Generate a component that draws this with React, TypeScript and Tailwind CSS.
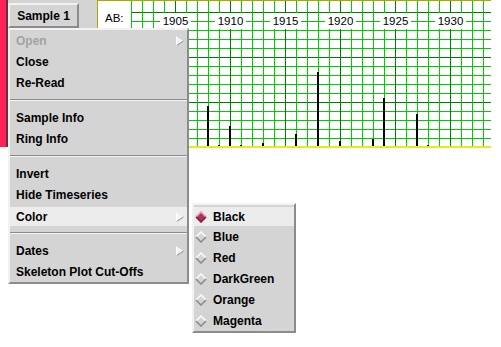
import React from "react";

type Entry = {
  label?: string;
  sep?: boolean;
  disabled?: boolean;
  cascade?: boolean;
  active?: boolean;
};

const mainMenu: Entry[] = [
  { label: "Open", disabled: true, cascade: true },
  { label: "Close" },
  { label: "Re-Read" },
  { sep: true },
  { label: "Sample Info" },
  { label: "Ring Info" },
  { sep: true },
  { label: "Invert" },
  { label: "Hide Timeseries" },
  { label: "Color", cascade: true, active: true },
  { sep: true },
  { label: "Dates", cascade: true },
  { label: "Skeleton Plot Cut-Offs" },
];

const colors = ["Black", "Blue", "Red", "DarkGreen", "Orange", "Magenta"];

// ring widths shown as bars: [year, top y]
const bars: [number, number][] = [
  [1908, 106],
  [1909, 145],
  [1910, 126],
  [1911, 145],
  [1913, 143],
  [1916, 134],
  [1918, 72],
  [1920, 141],
  [1923, 139],
  [1924, 98],
  [1927, 114],
  [1928, 145],
];

const colX = (year: number) => 34 + (year - 1901) * 11;

function Chart() {
  const cols = Array.from({ length: 33 }, (_, k) => k);
  const rows = Array.from({ length: 15 }, (_, j) => j);
  const years = [1905, 1910, 1915, 1920, 1925, 1930];

  return (
    <svg width={394} height={148} className="block shrink-0">
      <rect width={394} height={148} fill="#ffffff" />
      {rows.map((j) => (
        <line
          key={"h" + j}
          x1={34}
          x2={394}
          y1={12 + 9 * j + 0.5}
          y2={12 + 9 * j + 0.5}
          stroke={j % 5 === 0 ? "#008000" : "#00cc00"}
          strokeWidth={1}
        />
      ))}
      {cols.map((k) => (
        <line
          key={"v" + k}
          x1={34 + 11 * k + 0.5}
          x2={34 + 11 * k + 0.5}
          y1={0}
          y2={146}
          stroke={(k - 4) % 5 === 0 ? "#008000" : "#00cc00"}
          strokeWidth={1}
        />
      ))}
      {years.map((y) => (
        <g key={y}>
          <rect x={colX(y) - 15} y={13} width={31} height={16} fill="#ffffff" />
          <text
            x={colX(y) + 0.5}
            y={25}
            textAnchor="middle"
            fontSize={11.5}
            fontWeight={400}
            fontFamily="'Liberation Sans', Arial, sans-serif"
            fill="#000"
          >
            {y}
          </text>
        </g>
      ))}
      <text
        x={8}
        y={22}
        fontSize={11.5}
        fontWeight={400}
        fontFamily="'Liberation Sans', Arial, sans-serif"
        fill="#000"
      >
        AB:
      </text>
      {bars.map(([year, top]) => (
        <rect key={year} x={colX(year) - 1} y={top} width={2} height={146 - top} fill="#000" />
      ))}
      <rect x={0} y={0} width={394} height={1} fill="#a8a800" />
      <rect x={0} y={0} width={1} height={148} fill="#a8a800" />
      <rect x={0} y={146} width={394} height={2} fill="#e8e820" />
    </svg>
  );
}

function CascadeArrow() {
  return (
    <svg width={8} height={10} className="shrink-0">
      <polygon points="0.5,0.5 7.5,5 0.5,9.5" fill="#f4f4f4" />
      <line x1={0.5} y1={9.5} x2={7.5} y2={5} stroke="#8b8b8b" strokeWidth={1} />
      <line x1={0.5} y1={0.5} x2={0.5} y2={9.5} stroke="#ffffff" strokeWidth={1} />
    </svg>
  );
}

function Diamond({ on }: { on: boolean }) {
  return (
    <svg width={12} height={12} className="shrink-0">
      <polygon points="6,1 11,6 6,11 1,6" fill={on ? "#b03060" : "#d4d4d4"} />
      <polyline
        points="1,6 6,1 11,6"
        fill="none"
        stroke={on ? "#e8a0b8" : "#fafafa"}
        strokeWidth={1.6}
      />
      <polyline
        points="1,6 6,11 11,6"
        fill="none"
        stroke={on ? "#802040" : "#8b8b8b"}
        strokeWidth={1.6}
      />
    </svg>
  );
}

function MenuRow({ item }: { item: Entry }) {
  if (item.sep) {
    return (
      <div className="h-[14px] flex flex-col justify-center">
        <div className="h-[2px] border-t border-t-[#8b8b8b] border-b border-b-[#f4f4f4]" />
      </div>
    );
  }
  return (
    <div className={item.active ? "h-[21px] pt-[2px]" : "h-[21px]"}>
      <div
        className={
          "h-full flex items-center justify-between pl-[6px] pr-[3px] " +
          (item.active ? "bg-[#ececec] " : "") +
          (item.disabled ? "text-[#a3a3a3]" : "text-black")
        }
      >
        <span>{item.label}</span>
        {item.cascade && <CascadeArrow />}
      </div>
    </div>
  );
}

export default function App() {
  return (
    <div className="relative w-[501px] h-[347px] bg-white overflow-hidden font-['Liberation_Sans',Arial,sans-serif] text-[12px] font-bold leading-none">
      {/* main window */}
      <div className="flex h-[148px]">
        <div className="w-[6px] h-[147px] bg-[#ff2458]" />
        <div className="w-[2px] h-[147px] bg-[#643040]" />
        <div className="w-[89px] h-[147px] bg-[#d4d4d4] pt-[3px]">
          <div className="w-[71px] h-[25px] border-2 border-t-[#f2f2f2] border-l-[#f2f2f2] border-b-[#8b8b8b] border-r-[#8b8b8b] flex items-center justify-center">
            Sample 1
          </div>
        </div>
        <Chart />
      </div>

      {/* popup menu */}
      <div className="absolute left-[8px] top-[28px] w-[181px] bg-[#d4d4d4] border-2 border-t-[#f2f2f2] border-l-[#f2f2f2] border-b-[#8b8b8b] border-r-[#8b8b8b]">
        {mainMenu.map((item, i) => (
          <MenuRow key={i} item={item} />
        ))}
      </div>

      {/* color cascade */}
      <div className="absolute left-[192px] top-[203px] w-[104px] bg-[#d4d4d4] border-2 border-t-[#f2f2f2] border-l-[#f2f2f2] border-b-[#8b8b8b] border-r-[#8b8b8b]">
        {colors.map((c, i) => (
          <div key={c} className={i === 0 ? "h-[21px] pt-[2px]" : "h-[21px]"}>
            <div className={"h-full flex items-center pl-[1px] gap-[6px] " + (i === 0 ? "bg-[#ececec]" : "")}>
              <Diamond on={i === 0} />
              <span>{c}</span>
            </div>
          </div>
        ))}
      </div>
    </div>
  );
}
